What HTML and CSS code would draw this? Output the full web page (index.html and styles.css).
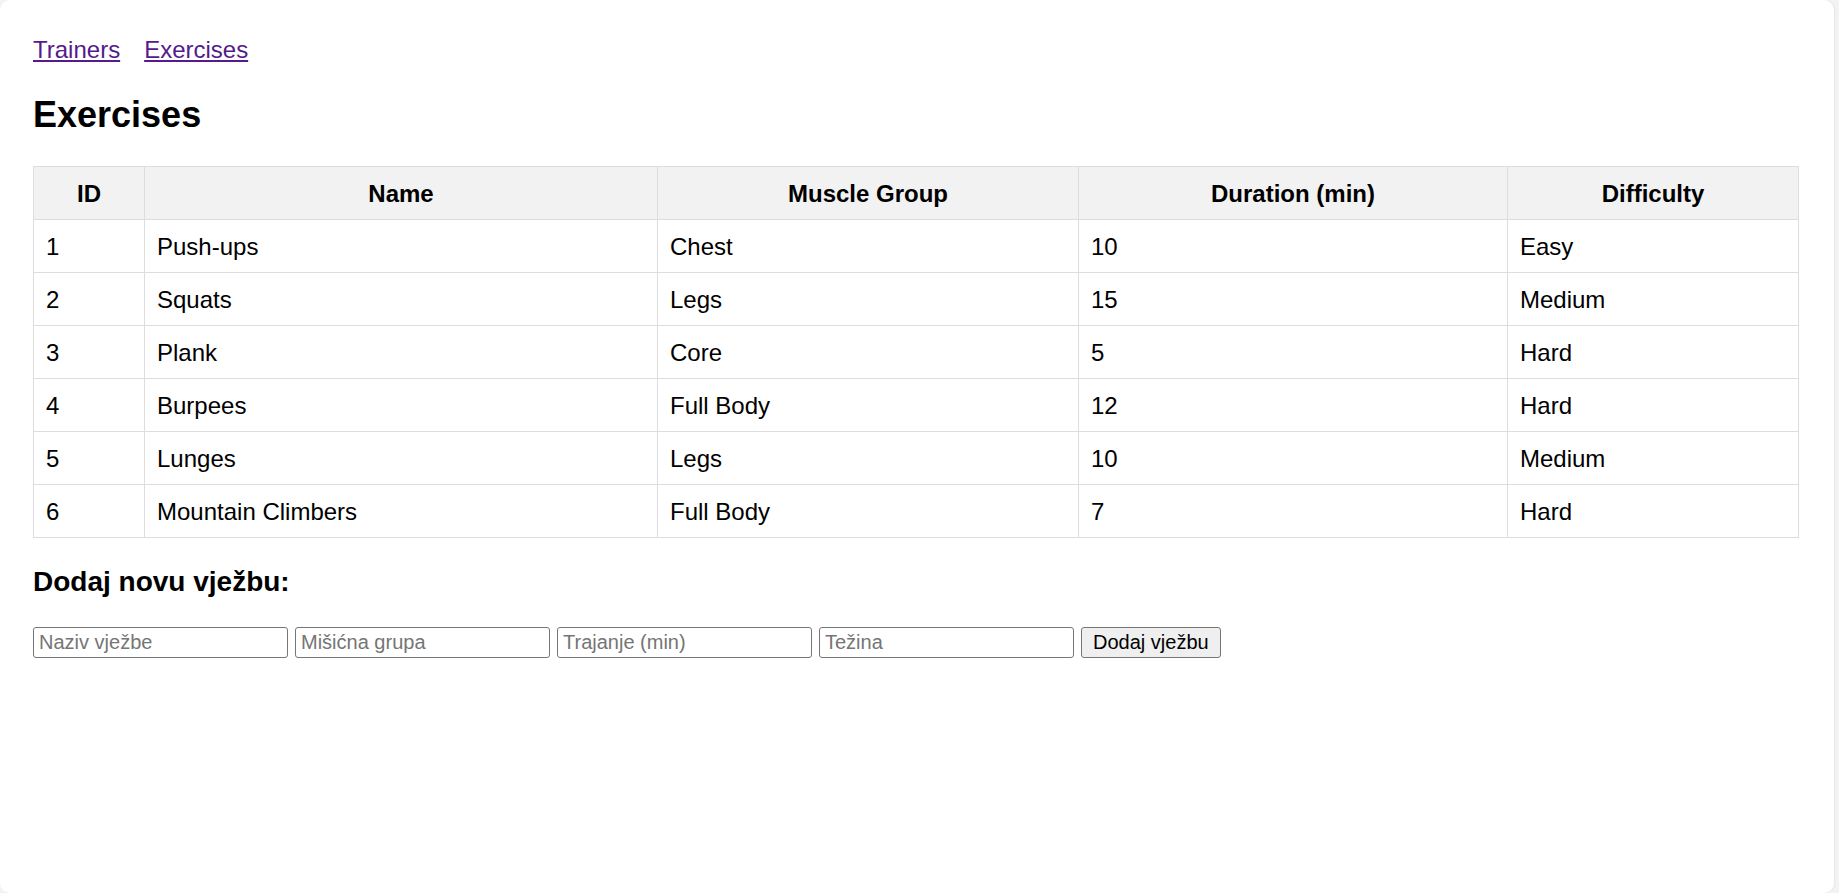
FILE: index.html
```html
<!DOCTYPE html>
<html lang="hr">
<head>
<meta charset="utf-8">
<title>Exercises</title>
<link rel="stylesheet" href="styles.css">
</head>
<body>
<div class="page">
  <nav class="nav">
    <a href="#" class="nav-link">Trainers</a>
    <a href="#" class="nav-link">Exercises</a>
  </nav>
  <h1 class="title">Exercises</h1>
  <table class="table">
    <colgroup>
      <col class="c-id">
      <col class="c-name">
      <col class="c-group">
      <col class="c-dur">
      <col class="c-diff">
    </colgroup>
    <thead>
      <tr><th>ID</th><th>Name</th><th>Muscle Group</th><th>Duration (min)</th><th>Difficulty</th></tr>
    </thead>
    <tbody>
      <tr><td>1</td><td>Push-ups</td><td>Chest</td><td>10</td><td>Easy</td></tr>
      <tr><td>2</td><td>Squats</td><td>Legs</td><td>15</td><td>Medium</td></tr>
      <tr><td>3</td><td>Plank</td><td>Core</td><td>5</td><td>Hard</td></tr>
      <tr><td>4</td><td>Burpees</td><td>Full Body</td><td>12</td><td>Hard</td></tr>
      <tr><td>5</td><td>Lunges</td><td>Legs</td><td>10</td><td>Medium</td></tr>
      <tr><td>6</td><td>Mountain Climbers</td><td>Full Body</td><td>7</td><td>Hard</td></tr>
    </tbody>
  </table>
  <h2 class="subtitle">Dodaj novu vježbu:</h2>
  <form class="form">
    <input class="field" type="text" placeholder="Naziv vježbe">
    <input class="field" type="text" placeholder="Mišićna grupa">
    <input class="field" type="text" placeholder="Trajanje (min)">
    <input class="field" type="text" placeholder="Težina">
    <button class="btn" type="button">Dodaj vježbu</button>
  </form>
</div>
</body>
</html>
```

FILE: styles.css
```css
html, body {
  margin: 0;
  padding: 0;
  background: #f3f3f3;
}
body {
  font-family: "Liberation Sans", Arial, sans-serif;
  color: #000;
}
.page {
  background: #fff;
  margin-right: 5px;
  height: 893px;
  box-sizing: border-box;
  border-radius: 10px;
  padding: 36px 36px 0 33px;
  box-shadow: 1px 0 2px rgba(0,0,0,0.06);
}
.nav {
  display: flex;
  gap: 24px;
  font-size: 24px;
  line-height: 27px;
}
.nav-link {
  color: #551a8b;
  text-decoration: underline;
}
.title {
  font-size: 36px;
  line-height: 41px;
  font-weight: bold;
  margin: 31px 0 0 0;
}
.table {
  width: 100%;
  table-layout: fixed;
  border-collapse: collapse;
  margin-top: 31px;
  font-size: 24px;
}
.c-id { width: 111px; }
.c-name { width: 513px; }
.c-group { width: 421px; }
.c-dur { width: 429px; }
.c-diff { width: 291px; }
.table th, .table td {
  border: 1px solid #dddddd;
  padding: 12.5px 12px;
  line-height: 27px;
  text-align: left;
}
.table th {
  background: #f2f2f2;
  text-align: center;
  font-weight: bold;
}
.subtitle {
  font-size: 28px;
  line-height: 32px;
  font-weight: bold;
  margin: 28px 0 0 0;
}
.form {
  display: flex;
  gap: 7px;
  margin-top: 29px;
  align-items: stretch;
}
.field {
  width: 255px;
  height: 31px;
  box-sizing: border-box;
  border: 1px solid #767676;
  border-radius: 3px;
  padding: 0 5px;
  font-family: "Liberation Sans", Arial, sans-serif;
  font-size: 20px;
  color: #000;
  background: #fff;
}
.field::placeholder {
  color: #757575;
}
.btn {
  height: 31px;
  box-sizing: border-box;
  border: 1px solid #767676;
  border-radius: 3px;
  background: #efefef;
  padding: 0 11px;
  font-family: "Liberation Sans", Arial, sans-serif;
  font-size: 20px;
  color: #000;
}
```
